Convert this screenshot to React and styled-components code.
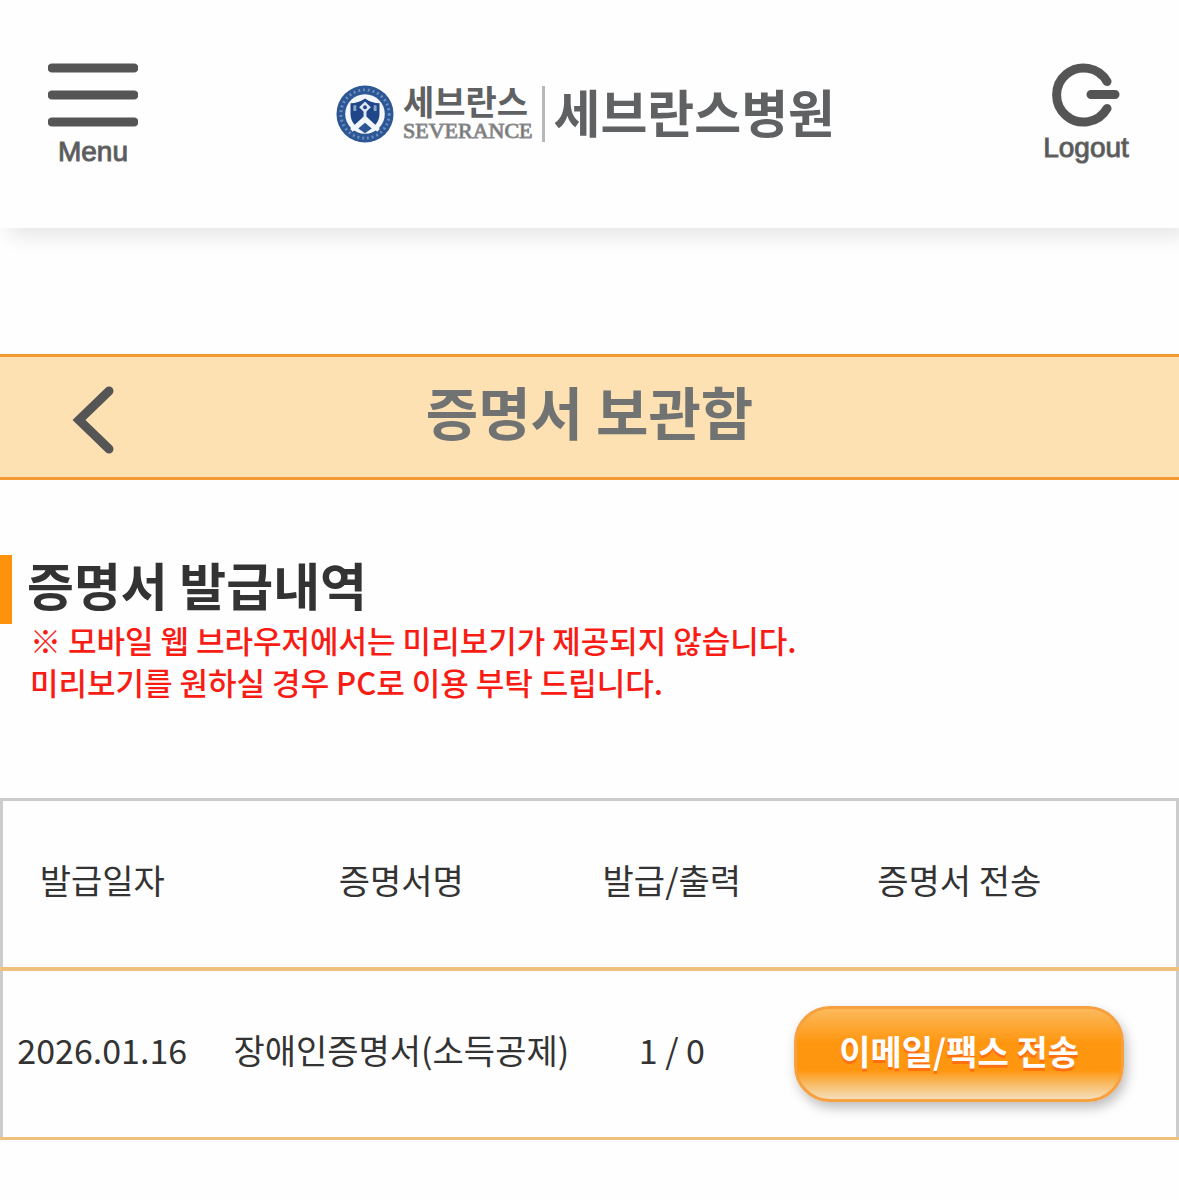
import styled, { createGlobalStyle } from "styled-components";

const GlobalStyle = createGlobalStyle`
  * {
    box-sizing: border-box;
  }

  body {
    margin: 0;
    background: #fefefe;
    color: #333;
    font-family: "Noto Sans CJK KR", sans-serif;
  }
`;

const Header = styled.header`
  display: flex;
  justify-content: space-between;
  align-items: center;
  height: 228px;
  padding: 0 48px;
  background: #fefefe;
  box-shadow: 9px 9px 18px rgba(0, 0, 0, 0.09);
`;

const HeaderButton = styled.button`
  display: flex;
  flex-direction: column;
  align-items: center;
  align-self: flex-start;
  width: 90px;
  margin-top: 63px;
  padding: 0;
  border: 0;
  background: none;
  color: #555;
  font-family: "Liberation Sans", sans-serif;
  font-size: 28px;
  line-height: 41px;
  -webkit-text-stroke: 1px #666;
  cursor: pointer;

  svg {
    display: block;
    flex-shrink: 0;
  }
`;

const Logo = styled.a`
  display: flex;
  align-items: center;
  gap: 9px;
  padding-right: 8px;
  color: #606163;
  font-weight: 700;
  text-decoration: none;
  white-space: nowrap;
`;

const Brand = styled.span`
  display: flex;
  flex-direction: column;
  font-size: 34px;
  line-height: 34px;
`;

const BrandLatin = styled.span`
  color: #6c6d6f;
  font-family: "Liberation Serif", serif;
  font-size: 22px;
  font-weight: 400;
  line-height: 26px;
  -webkit-text-stroke: 1px #8c8d8f;
`;

const Divider = styled.span`
  width: 3px;
  height: 56px;
  background: #b8b8b8;
`;

const Hospital = styled.span`
  padding-bottom: 6px;
  font-size: 51px;
  line-height: 56px;
`;

const TitleBar = styled.div`
  display: grid;
  grid-template-columns: 120px 1fr 120px;
  align-items: center;
  height: 126px;
  margin-top: 126px;
  border-top: 3px solid #f59a32;
  border-bottom: 3px solid #f59a32;
  background: #fee1b3;
`;

const BackButton = styled.button`
  justify-self: end;
  padding: 6px 0 0;
  border: 0;
  background: none;
  cursor: pointer;

  svg {
    display: block;
  }
`;

const PageTitle = styled.h1`
  margin: 0;
  padding-bottom: 14px;
  color: #707372;
  font-size: 57px;
  font-weight: 700;
  line-height: 80px;
  text-align: center;
`;

const Section = styled.section`
  margin-top: 75px;
`;

const SectionTitle = styled.h2`
  margin: 0;
  padding: 0 0 11px 15px;
  border-left: 12px solid #fd930c;
  font-size: 51px;
  font-weight: 700;
  line-height: 58px;
`;

const Notice = styled.p`
  margin: -5px 0 95px;
  padding-left: 30px;
  color: #f81c14;
  font-size: 31px;
  font-weight: 500;
  line-height: 42px;
`;

const Table = styled.table`
  width: 100%;
  border: 3px solid #ccc;
  border-collapse: collapse;
  table-layout: fixed;
  font-size: 34px;
  line-height: 48px;
  text-align: center;
`;

const Row = styled.tr`
  height: ${(props) => (props.$head ? 169 : 170)}px;
  border-bottom: ${(props) => (props.$head ? 4 : 3)}px solid #efc07e;
`;

const HeadCell = styled.th`
  width: ${(props) => props.$width};
  padding: 0 0 8px;
  font-weight: 400;
  white-space: nowrap;
`;

const Cell = styled.td`
  padding: 0 0 ${(props) => (props.$action ? 0 : 8)}px;
  white-space: nowrap;
`;

const SendButton = styled.button`
  width: 330px;
  height: 96px;
  padding: 0 0 6px;
  border: 3px solid #f6a040;
  border-radius: 36px;
  background: linear-gradient(#fcb95c 0%, #ff960f 38%, #ff960f 68%, #f7bd68 84%, #f5dfbb 100%);
  box-shadow: 3px 6px 12px rgba(0, 0, 0, 0.25);
  color: #fff;
  font-family: inherit;
  font-size: 34px;
  font-weight: 700;
  line-height: 48px;
  text-shadow: 0 3px 0 #ff7010;
  vertical-align: middle;
  cursor: pointer;
`;

const columns = [
  { label: "발급일자", width: "17%" },
  { label: "증명서명", width: "34%" },
  { label: "발급/출력", width: "12%" },
  { label: "증명서 전송", width: "37%" },
];

const certificates = [
  { date: "2026.01.16", name: "장애인증명서(소득공제)", count: "1 / 0" },
];

function MenuIcon() {
  return (
    <svg width="90" height="68" viewBox="0 0 90 68" aria-hidden="true">
      <path d="M4 5H86M4 32H86M4 59H86" stroke="#555" strokeWidth="9" strokeLinecap="round" />
    </svg>
  );
}

function LogoutIcon() {
  return (
    <svg width="68" height="64" viewBox="0 0 68 64" fill="none" aria-hidden="true">
      <path
        d="M55 18.500A27 27 0 1 0 55 45.500M39 31.500H63"
        stroke="#555"
        strokeWidth="9"
        strokeLinecap="round"
      />
    </svg>
  );
}

function Emblem() {
  return (
    <svg width="58" height="58" viewBox="0 0 60 60" aria-hidden="true">
      <circle cx="30" cy="30" r="29.500" fill="#2c5694" />
      <circle cx="30" cy="30" r="25" fill="none" stroke="#6f8fbf" strokeWidth="3" strokeDasharray="2 3" />
      <circle cx="30" cy="30" r="20.500" fill="#f4f7fb" />
      <path d="M15 19q8 0 15-5 7 5 15 5v11q0 7-5 12L30 33 20 42q-5-5-5-12z" fill="#1f4688" />
      <path d="M30 17l6 6-6 6-6-6z" fill="#dfe8f3" />
      <circle cx="30" cy="23" r="2" fill="#1f4688" />
      <path d="M18 21h3v6h-3zM39 21h3v6h-3z" fill="#8ba5ca" />
      <path d="M30 27v7" stroke="#dfe8f3" strokeWidth="3" />
      <path d="M30 34L16 47M30 34l14 13" fill="none" stroke="#f4f7fb" strokeWidth="4" />
      <path d="M30 39l7 6-7 5-7-5z" fill="#2c5694" />
    </svg>
  );
}

function App() {
  return (
    <>
      <GlobalStyle />
      <Header>
        <HeaderButton type="button">
          <MenuIcon />
          Menu
        </HeaderButton>
        <Logo href="#">
          <Emblem />
          <Brand>
            세브란스
            <BrandLatin>SEVERANCE</BrandLatin>
          </Brand>
          <Divider />
          <Hospital>세브란스병원</Hospital>
        </Logo>
        <HeaderButton type="button">
          <LogoutIcon />
          Logout
        </HeaderButton>
      </Header>
      <main>
        <TitleBar>
          <BackButton type="button" aria-label="뒤로">
            <svg width="48" height="68" viewBox="0 0 48 68" fill="none">
              <path d="M37 5L7 34L37 63" stroke="#555" strokeWidth="9" strokeLinecap="round" />
            </svg>
          </BackButton>
          <PageTitle>증명서 보관함</PageTitle>
        </TitleBar>
        <Section>
          <SectionTitle>증명서 발급내역</SectionTitle>
          <Notice>
            ※ 모바일 웹 브라우저에서는 미리보기가 제공되지 않습니다.
            <br />
            미리보기를 원하실 경우 PC로 이용 부탁 드립니다.
          </Notice>
          <Table>
            <thead>
              <Row $head>
                {columns.map((column) => (
                  <HeadCell key={column.label} scope="col" $width={column.width}>
                    {column.label}
                  </HeadCell>
                ))}
              </Row>
            </thead>
            <tbody>
              {certificates.map((item) => (
                <Row key={item.name}>
                  <Cell>{item.date}</Cell>
                  <Cell>{item.name}</Cell>
                  <Cell>{item.count}</Cell>
                  <Cell $action>
                    <SendButton type="button">이메일/팩스 전송</SendButton>
                  </Cell>
                </Row>
              ))}
            </tbody>
          </Table>
        </Section>
      </main>
    </>
  );
}

export default App;
